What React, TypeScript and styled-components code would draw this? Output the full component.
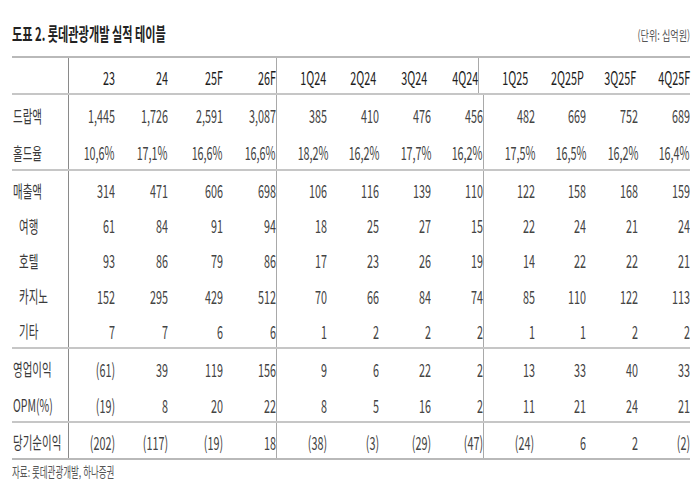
import React from "react";
import styled, { createGlobalStyle } from "styled-components";

const Global = createGlobalStyle`
  html, body { margin: 0; padding: 0; background: #fff; }
  body {
    font-family: "Noto Sans CJK KR", "Noto Sans", sans-serif;
    width: 700px; height: 500px; overflow: hidden;
  }
`;

const Page = styled.div`
  width: 700px;
  height: 500px;
  box-sizing: border-box;
  padding: 0 10px 0 12px;
`;

const TitleBar = styled.div`
  height: 56px;
  box-sizing: border-box;
  padding-top: 22px;
  display: flex;
  justify-content: space-between;
  align-items: flex-start;
`;

const Title = styled.h1`
  margin: 0;
  font-size: 18px;
  line-height: 22px;
  font-weight: 700;
  color: #222;
`;

const Unit = styled.div`
  margin-top: 5px;
  font-size: 13px;
  line-height: 16px;
  color: #555;
`;

const Squeeze = styled.span<{ $origin?: "left" | "right"; $scale?: number }>`
  display: inline-block;
  white-space: nowrap;
  transform: scaleX(${(p) => p.$scale ?? 0.6});
  transform-origin: ${(p) => p.$origin ?? "left"} center;
`;

const Table = styled.div`
  width: 678px;
  border-top: 2px solid #b9b9b9;
  border-bottom: 2px solid #b9b9b9;
`;

const Row = styled.div<{ $h: number; $line?: boolean }>`
  display: grid;
  grid-template-columns: 56px 47px 53px 55px 52.5px repeat(8, 1fr);
  height: ${(p) => p.$h}px;
  box-sizing: border-box;
  border-bottom: ${(p) => (p.$line ? "2px solid #c6c6c6" : "none")};
`;

const Cell = styled.div<{ $div?: "strong" | "soft"; $head?: boolean }>`
  display: flex;
  align-items: center;
  justify-content: flex-end;
  padding-top: 3px;
  box-sizing: border-box;
  border-left: ${(p) =>
    p.$div === "strong" ? "1px solid #8a8a8a" : p.$div === "soft" ? "1px solid #a9a9a9" : "none"};
  font-size: 18px;
  color: ${(p) => (p.$head ? "#1e1e1e" : "#444")};
`;

const LabelCell = styled.div<{ $indent?: boolean }>`
  display: flex;
  align-items: center;
  padding-top: 3px;
  padding-left: ${(p) => (p.$indent ? 7 : 1)}px;
  box-sizing: border-box;
  font-size: 17.5px;
  color: #3a3a3a;
`;

const Source = styled.div`
  margin-top: 3px;
  font-size: 13.5px;
  line-height: 16px;
  color: #555;
`;

const headers = ["23", "24", "25F", "26F", "1Q24", "2Q24", "3Q24", "4Q24", "1Q25", "2Q25P", "3Q25F", "4Q25F"];

type RowDef = { label: string; values: string[]; h: number; line?: boolean; indent?: boolean };

const rows: RowDef[] = [
  { label: "드랍액", h: 37, values: ["1,445", "1,726", "2,591", "3,087", "385", "410", "476", "456", "482", "669", "752", "689"] },
  { label: "홀드율", h: 39, line: true, values: ["10,6%", "17,1%", "16,6%", "16,6%", "18,2%", "16,2%", "17,7%", "16,2%", "17,5%", "16,5%", "16,2%", "16,4%"] },
  { label: "매출액", h: 35.2, values: ["314", "471", "606", "698", "106", "116", "139", "110", "122", "158", "168", "159"] },
  { label: "여행", h: 35.2, indent: true, values: ["61", "84", "91", "94", "18", "25", "27", "15", "22", "24", "21", "24"] },
  { label: "호텔", h: 35.2, indent: true, values: ["93", "86", "79", "86", "17", "23", "26", "19", "14", "22", "22", "21"] },
  { label: "카지노", h: 35.2, indent: true, values: ["152", "295", "429", "512", "70", "66", "84", "74", "85", "110", "122", "113"] },
  { label: "기타", h: 37.2, indent: true, line: true, values: ["7", "7", "6", "6", "1", "2", "2", "2", "1", "1", "2", "2"] },
  { label: "영업이익", h: 37, values: ["(61)", "39", "119", "156", "9", "6", "22", "2", "13", "33", "40", "33"] },
  { label: "OPM(%)", h: 37, line: true, values: ["(19)", "8", "20", "22", "8", "5", "16", "2", "11", "21", "24", "21"] },
  { label: "당기순이익", h: 35, values: ["(202)", "(117)", "(19)", "18", "(38)", "(3)", "(29)", "(47)", "(24)", "6", "2", "(2)"] },
];

const divFor = (i: number): "strong" | "soft" | undefined =>
  i === 0 ? "strong" : i === 4 || i === 8 ? "soft" : undefined;

export default function App() {
  return (
    <Page>
      <Global />
      <TitleBar>
        <Title>
          <Squeeze $scale={0.62}>도표 2. 롯데관광개발 실적 테이블</Squeeze>
        </Title>
        <Unit>
          <Squeeze $origin="right" $scale={0.7}>(단위: 십억원)</Squeeze>
        </Unit>
      </TitleBar>
      <Table>
        <Row $h={37} $line>
          <LabelCell />
          {headers.map((h, i) => (
            <Cell key={h} $div={divFor(i)} $head>
              <Squeeze $origin="right">{h}</Squeeze>
            </Cell>
          ))}
        </Row>
        {rows.map((r) => (
          <Row key={r.label} $h={r.h} $line={r.line}>
            <LabelCell $indent={r.indent}>
              <Squeeze>{r.label}</Squeeze>
            </LabelCell>
            {r.values.map((v, i) => (
              <Cell key={i} $div={divFor(i)}>
                <Squeeze $origin="right">{v}</Squeeze>
              </Cell>
            ))}
          </Row>
        ))}
      </Table>
      <Source>
        <Squeeze $scale={0.63}>자료: 롯데관광개발, 하나증권</Squeeze>
      </Source>
    </Page>
  );
}
